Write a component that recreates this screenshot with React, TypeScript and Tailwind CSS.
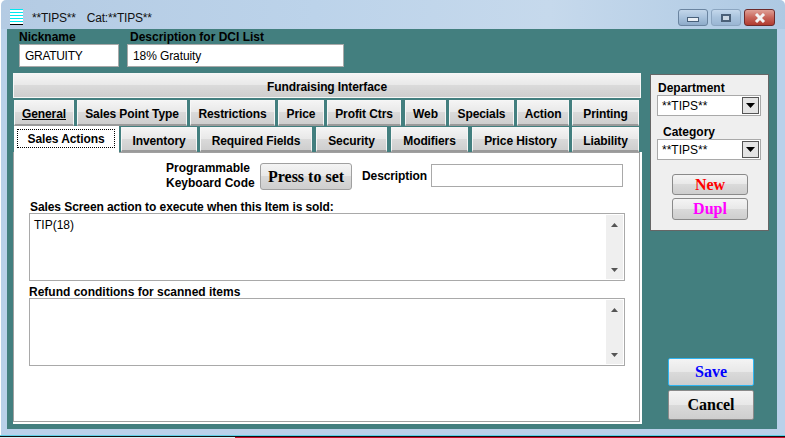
const sans = "font-['Liberation_Sans',Arial,sans-serif]";
const serif = "font-['Liberation_Serif','Times_New_Roman',serif]";
const shine = "bg-[linear-gradient(#f4f4f4_0%,#e8e8e8_49%,#dadada_50%,#cecece_100%)]";

const rowOne = [
  { label: "General", cls: "w-[60px] ml-px underline" },
  { label: "Sales Point Type", cls: "w-[110px] ml-[3px]" },
  { label: "Restrictions", cls: "w-[85px] ml-[3px]" },
  { label: "Price", cls: "w-[46px] ml-[3px]" },
  { label: "Profit Ctrs", cls: "w-[74px] ml-[3px]" },
  { label: "Web", cls: "w-[41px] ml-[4px]" },
  { label: "Specials", cls: "w-[65px] ml-[3px]" },
  { label: "Action", cls: "w-[52px] ml-[3px]" },
  { label: "Printing", cls: "w-[67px] ml-[3px]" },
];

const rowTwo = [
  { label: "Inventory", cls: "w-[76px] ml-[2px]" },
  { label: "Required Fields", cls: "w-[112px] ml-[3px]" },
  { label: "Security", cls: "w-[71px] ml-[4px]" },
  { label: "Modifiers", cls: "w-[77px] ml-[4px]" },
  { label: "Price History", cls: "w-[97px] ml-[4px]" },
  { label: "Liability", cls: "w-[67px] ml-[3px]" },
];

function Tab({ label, cls }: { label: string; cls: string }) {
  return (
    <div
      className={`pt-[3px] flex items-center justify-center border border-[#f6f6f6] border-b-2 border-b-[#9a9a9a] text-[12px] tracking-[-0.1px] font-bold text-black ${shine} ${cls}`}
    >
      {label}
    </div>
  );
}

function ScrollArea({ text }: { text?: string }) {
  return (
    <div className="ml-[15px] w-[596px] h-[68px] border border-[#a9a9a9] bg-white flex justify-between">
      <div className="pl-[4px] pt-[3px] text-[12px] leading-[16px] text-black">{text}</div>
      <div className="w-[17px] mr-px my-px bg-[#efefef] flex flex-col justify-between items-center pt-[8px] pb-[7px]">
        <svg width="7" height="4" viewBox="0 0 7 4"><path d="M3.5 0 7 4H0z" fill="#555" /></svg>
        <svg width="7" height="4" viewBox="0 0 7 4"><path d="M0 0h7L3.5 4z" fill="#555" /></svg>
      </div>
    </div>
  );
}

function Select() {
  return (
    <div className="w-[104px] h-[21px] border border-[#a9a9a9] bg-white flex items-center justify-between pl-[4px] pr-px text-[12px] font-normal text-black">
      <span>**TIPS**</span>
      <div className="w-[17px] h-[17px] border border-[#555] bg-[#e4e4e4] flex items-center justify-center">
        <svg width="9" height="5" viewBox="0 0 9 5"><path d="M0 0h9L4.5 5z" fill="#000" /></svg>
      </div>
    </div>
  );
}

export default function App() {
  return (
    <div className={`w-[785px] h-[438px] overflow-hidden relative bg-white ${sans}`}>
      {/* title bar */}
      <div className="ml-px h-[29px] rounded-tl-[5px] rounded-tr-[5px] flex items-start bg-[linear-gradient(90deg,#b4cbe3_0%,#bcd3ea_40%,#c6d9ec_70%,#aec9e3_100%)]">
        <div className="ml-[9px] mt-[9px] w-[13px] h-[16px] bg-[repeating-linear-gradient(#00e8f0_0px,#00e8f0_1px,#ffffff_1px,#ffffff_3px)] border-b border-black" />
        <span className="ml-[9px] mt-[11px] text-[12px] tracking-[-0.2px] leading-[14px] text-[#111]">**TIPS**</span>
        <span className="ml-[11px] mt-[11px] text-[12px] tracking-[-0.2px] leading-[14px] text-[#111]">Cat:**TIPS**</span>
        <div className="ml-auto mr-[10px] mt-[9px] flex gap-[3px]">
          <div className="w-[30px] h-[17px] rounded-[3px] border border-[#6a84a0] bg-[linear-gradient(#c2d6ea,#a8c2dc_50%,#8eabc9)] flex items-center justify-center">
            <div className="w-[12px] h-[5px] mt-[4px] bg-[#e8eef4] border border-[#48607a]" />
          </div>
          <div className="w-[30px] h-[17px] rounded-[3px] border border-[#8ba5c0] bg-[linear-gradient(#c4d8ec,#a9c3dd_50%,#9ab6d3)] flex items-center justify-center">
            <div className="w-[10px] h-[8px] border-2 border-[#4a6078] bg-[#ccd8e4]" />
          </div>
          <div className="w-[31px] h-[17px] rounded-[3px] border border-[#6d2a2a] bg-[linear-gradient(#dfa096,#c8655a_50%,#b03c30)] flex items-center justify-center">
            <svg width="14" height="10" viewBox="0 0 14 10">
              <path d="M3 1 11 9M11 1 3 9" stroke="#f4f4f4" strokeWidth="3" />
            </svg>
          </div>
        </div>
      </div>

      {/* client area */}
      <div className="ml-px w-[784px] h-[406px] bg-[#b9d1ea] pl-[6px]">
        <div className="w-[770px] h-[400px] bg-[#437f7f] flex">
          <div className="ml-[6px] w-[629px]">
            <div className="ml-[6px] flex h-[37px] text-[12px] font-bold text-black">
              <div className="w-[100px] flex flex-col">
                <div className="h-[15px] leading-[17px]">Nickname</div>
                <div className="h-[23px] border border-[#a9a9a9] bg-white pl-[5px] font-normal tracking-[-0.3px] leading-[23px]">GRATUITY</div>
              </div>
              <div className="ml-[8px] w-[217px] flex flex-col">
                <div className="h-[15px] leading-[17px] ml-[3px]">Description for DCI List</div>
                <div className="h-[23px] border border-[#a9a9a9] bg-white pl-[5px] font-normal tracking-[-0.1px] leading-[23px]">18% Gratuity</div>
              </div>
            </div>

            <div className={`mt-[7px] w-[628px] h-[25px] pt-[3px] border border-[#f6f6f6] flex items-center justify-center text-[12px] tracking-[-0.1px] font-bold text-black ${shine}`}>
              Fundraising Interface
            </div>

            <div className="mt-[2px] flex h-[26px]">
              {rowOne.map((t) => (
                <Tab key={t.label} label={t.label} cls={t.cls} />
              ))}
            </div>

            <div className="mt-px flex h-[25px] relative z-10">
              <div className="ml-px -mt-px w-[105px] h-[27px] bg-white pt-[3px] pl-[3px]">
                <div className="w-[98px] h-[19px] pt-px border border-dotted border-black flex items-center justify-center text-[12px] tracking-[-0.1px] font-bold text-black">
                  Sales Actions
                </div>
              </div>
              {rowTwo.map((t) => (
                <Tab key={t.label} label={t.label} cls={t.cls} />
              ))}
            </div>

            <div className="h-[272px] bg-white pr-[2px] pb-[2px]">
              <div className="h-full border border-[#a0a0a0] text-black">
                <div className="flex h-[46px] items-start">
                  <div className="ml-[152px] mt-[8px] w-[90px] whitespace-nowrap text-[12px] font-bold leading-[15px]">
                    Programmable
                    <br />
                    Keyboard Code
                  </div>
                  <div className={`ml-[4px] mt-[10px] w-[92px] h-[27px] rounded-[3px] border border-[#a0a0a0] flex items-center justify-center text-[16px] font-bold ${serif} ${shine}`}>
                    Press to set
                  </div>
                  <div className="ml-[10px] mt-[16px] w-[65px] whitespace-nowrap text-[12px] tracking-[-0.1px] font-bold leading-[14px]">Description</div>
                  <div className="ml-[4px] mt-[11px] w-[192px] h-[23px] border border-[#a9a9a9] bg-white" />
                </div>
                <div className="ml-[16px] h-[14px] text-[12px] tracking-[-0.08px] font-bold leading-[17px]">
                  Sales Screen action to execute when this Item is sold:
                </div>
                <ScrollArea text="TIP(18)" />
                <div className="ml-[15px] mt-[3px] h-[14px] text-[12px] font-bold leading-[17px]">
                  Refund conditions for scanned items
                </div>
                <ScrollArea />
              </div>
            </div>
          </div>

          {/* right column */}
          <div className="ml-[8px] w-[119px] flex flex-col">
            <div className="mt-[45px] h-[157px] border border-[#666] bg-[#efefef] pl-[6px] text-[12px] font-bold text-black">
              <div className="mt-[5px] ml-px h-[15px] leading-[16px]">Department</div>
              <Select />
              <div className="mt-[8px] ml-[6px] h-[15px] leading-[16px]">Category</div>
              <Select />
              <div className={`mt-[14px] ml-[15px] w-[76px] h-[21px] rounded-[3px] border border-[#8a8a8a] flex items-center justify-center text-[16px] font-bold text-[#ff0000] ${serif} ${shine}`}>
                New
              </div>
              <div className={`mt-[3px] ml-[15px] w-[76px] h-[22px] rounded-[3px] border border-[#8a8a8a] flex items-center justify-center text-[16px] font-bold text-[#ff00ff] ${serif} ${shine}`}>
                Dupl
              </div>
            </div>
            <div className={`mt-[127px] ml-[18px] w-[86px] h-[28px] rounded-[2px] border border-[#2fb4f0] flex items-center justify-center text-[16px] font-bold text-[#0000ff] ${serif} ${shine}`}>
              Save
            </div>
            <div className={`mt-[4px] ml-[18px] w-[86px] h-[30px] rounded-[2px] border border-[#8a8a8a] flex items-center justify-center text-[16px] font-bold text-black ${serif} ${shine}`}>
              Cancel
            </div>
          </div>
        </div>
      </div>

      <div className="h-px bg-[#5fd0e8]" />
      <div className="h-px bg-[#111]" />
      <div className="flex h-px">
        <div className="w-[235px] bg-[#d8eef4]" />
        <div className="flex-1 bg-[#c8102e]" />
      </div>
    </div>
  );
}
